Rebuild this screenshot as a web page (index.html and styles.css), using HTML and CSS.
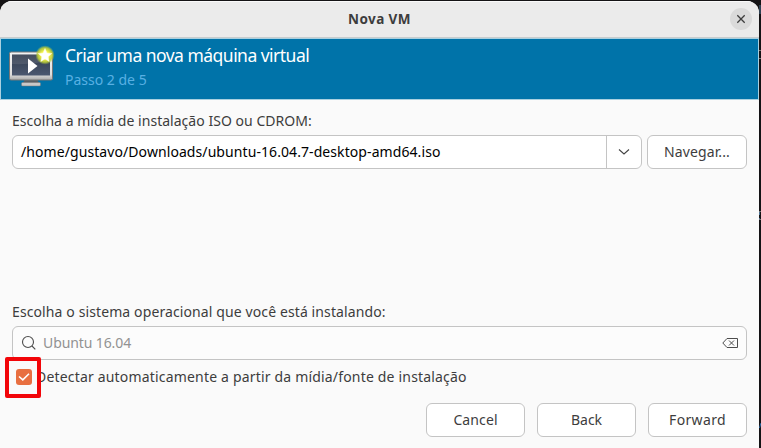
FILE: index.html
```html
<!DOCTYPE html>
<html lang="pt-BR">
<head>
<meta charset="utf-8">
<title>Nova VM</title>
<link rel="stylesheet" href="styles.css">
</head>
<body>
<svg class="desktop" width="761" height="448" viewBox="0 0 761 448" fill="none">
  <path d="M760 5v9M759.500 211v4M759.500 218v2" stroke="#4b7191"/>
  <path d="M759 50.500h2M759 58.500h2M759 211.500h2M759 219.500h2" stroke="#777"/>
  <path d="M759.500 428l1.500-5" stroke="#286caa"/>
</svg>
<main class="window">
  <header class="titlebar">
    <h1 class="t-title">Nova VM</h1>
    <button class="close" aria-label="Fechar"><svg width="10" height="10" viewBox="0 0 10 10"><path d="M1.300 1.300l7.400 7.400M8.700 1.300l-7.400 7.400" stroke="#3d3d3d" stroke-width="1.300"/></svg></button>
  </header>
  <section class="banner">
    <svg class="vm-icon" width="48" height="48" viewBox="0 0 48 48">
      <defs>
        <linearGradient id="frame" x2="0" y2="1"><stop stop-color="#f5f5f5"/><stop offset=".8" stop-color="#ddd"/><stop offset="1" stop-color="#aaa"/></linearGradient>
        <linearGradient id="screen" x2="0" y2="1"><stop stop-color="#303a4c"/><stop offset="1" stop-color="#4b5870"/></linearGradient>
        <radialGradient id="glow"><stop offset=".4" stop-color="#f5f34a"/><stop offset=".75" stop-color="#bfce38" stop-opacity=".9"/><stop offset="1" stop-color="#a3c44a" stop-opacity="0"/></radialGradient>
      </defs>
      <path d="M17 34h12l2 4H15z" fill="#596066"/>
      <rect x="13.500" y="37.500" width="19" height="3.500" rx="1" fill="#c8c8c8" stroke="#777" stroke-width=".5"/>
      <rect x="1.500" y="7" width="43" height="28" rx="1.500" fill="url(#frame)" stroke="#777"/>
      <rect x="4" y="9.500" width="38" height="21" fill="url(#screen)"/>
      <path d="M4 9.500h38v5Q27 20 4 19z" fill="#fff" opacity=".1"/>
      <path d="M20 13.500v15l9.500-7.500z" fill="#fff"/>
      <circle cx="37" cy="10" r="9.700" fill="url(#glow)"/>
      <path d="M37 3.500l2 4.500 4.800.5-3.600 3.200 1 4.800-4.200-2.500-4.200 2.500 1-4.800-3.600-3.200 4.800-.5z" fill="#fff" stroke="#ffffd0" stroke-width=".5"/>
    </svg>
    <div class="heading"><h2 class="t-heading">Criar uma nova máquina virtual</h2><p class="t-step">Passo 2 de 5</p></div>
  </section>
  <section class="content">
    <label class="t-media">Escolha a mídia de instalação ISO ou CDROM:</label>
    <div class="media-row">
      <div class="combo"><div class="path"><span class="t-path">/home/gustavo/Downloads/ubuntu-16.04.7-desktop-amd64.iso</span></div>
        <button class="arrow" aria-label="Abrir"><svg width="12" height="8" viewBox="0 0 12 8"><path d="M1 1.500l5 4.500 5-4.500" fill="none" stroke="#444" stroke-width="1.100"/></svg></button></div>
      <button class="button browse"><span class="t-browse">Navegar...</span></button>
    </div>
    <label class="os-label"><span class="t-os">Escolha o sistema operacional que você está instalando:</span></label>
    <div class="search">
      <svg width="16" height="16" viewBox="0 0 16 16" fill="none" stroke="#4d4d4d" stroke-width="1.100"><circle cx="7" cy="7" r="5.500"/><path d="M11 11l3.300 3.300"/></svg>
      <span class="t-search">Ubuntu 16.04</span>
      <svg class="clear" width="16" height="12" viewBox="0 0 16 12" fill="none" stroke="#4d4d4d"><path d="M5 1.500h10.500v9H5L.8 6zM7 3.500l5 5M12 3.500l-5 5"/></svg>
    </div>
    <div class="detect">
      <span class="check"><svg width="16" height="16" viewBox="0 0 16 16"><path d="M3 7.500l3.800 3.300 6.200-6" fill="none" stroke="#fff" stroke-width="1.600"/></svg><span class="marker"></span></span>
      <span class="t-detect">Detectar automaticamente a partir da mídia/fonte de instalação</span>
    </div>
    <footer class="actions">
      <button class="button"><span class="t-cancel">Cancel</span></button>
      <button class="button"><span class="t-back">Back</span></button>
      <button class="button"><span class="t-forward">Forward</span></button>
    </footer>
  </section>
</main>
</body>
</html>
```
FILE: styles.css
```css
* { box-sizing: border-box; }
body { margin: 0; width: 761px; height: 448px; overflow: hidden; background: #141315; color: #3d3d3d; font: 14px/20px "Noto Sans", sans-serif; }
h1, h2, p { margin: 0; font-weight: 400; }
button { padding: 0; border: 0; background: none; color: inherit; font: inherit; }
svg { display: block; flex: none; }
span, label { white-space: nowrap; }
.desktop { position: absolute; left: 0; top: 0; z-index: -1; }
.window { width: 759px; height: 447px; margin-top: 1px; display: flex; flex-direction: column; background: #fafafa; border-radius: 12px 12px 0 0; overflow: hidden; }
.titlebar { height: 37px; flex: none; background: #ebebeb; border-top: 1px solid #fafafa; border-bottom: 1px solid #c8cccd; display: grid; grid-template-columns: 1fr auto 1fr; align-items: center; }
.titlebar h1 { grid-column: 2; font-weight: 700; margin-top: -2px; }
.close { justify-self: end; width: 22px; height: 22px; margin: -2px 7px 0 0; border-radius: 50%; background: #dadada; display: grid; place-items: center; }
.banner { height: 62px; flex: none; background: #0073a9; border: 1px solid #a9d0e0; display: flex; padding: 5px 7px; }
.vm-icon { margin-top: 1px; }
.heading { margin-left: 9px; white-space: nowrap; }
.t-heading { color: #fff; font-size: 17.500px; line-height: 24px; margin-top: -1px; letter-spacing: -.52px; }
.t-step { color: #58b0e3; line-height: 24px; padding-top: 1px; }
.content { flex: 1; padding: 11px 12px 0; display: flex; flex-direction: column; }
.media-row { display: flex; gap: 5px; margin-top: 4px; }
.combo { width: 630px; height: 34px; border: 1px solid #c4c4c4; border-radius: 6px; background: #fff; display: flex; }
.path { flex: 1; padding: 6px 8px; color: #000; }
.arrow { width: 35px; border-left: 1px solid #c4c4c4; display: grid; place-items: center; }
.button { width: 99px; height: 34px; border: 1px solid #c4c4c4; border-radius: 6px; background: #fff; }
.browse { width: 100px; }
.os-label { margin-top: 133px; }
.search { height: 34px; margin-top: 4px; border: 1px solid #c4c4c4; border-radius: 6px; background: #fcfcfc; display: flex; align-items: center; padding: 0 8px; gap: 6px; color: #929292; }
.clear { margin-left: auto; }
.detect { display: flex; align-items: center; margin-top: 7px; padding-left: 4px; gap: 4px; height: 20px; }
.check { position: relative; width: 16px; height: 16px; border-radius: 3px; background: #e86f40; }
.marker { position: absolute; left: -11px; top: -12px; width: 36px; height: 41px; border: 4px solid #f20509; border-radius: 2px; }
.actions { display: flex; justify-content: flex-end; gap: 12px; margin-top: 16px; }
.t-title { font-size: 13.500px; letter-spacing: .4px; }
.t-media { letter-spacing: .03px; }
.t-path { letter-spacing: .08px; }
.t-browse { letter-spacing: .1px; }
.t-os { letter-spacing: .11px; }
.t-search { letter-spacing: -.1px; }
.t-detect { letter-spacing: .18px; }
.t-cancel { letter-spacing: .1px; }
.t-forward { letter-spacing: .35px; }
```
